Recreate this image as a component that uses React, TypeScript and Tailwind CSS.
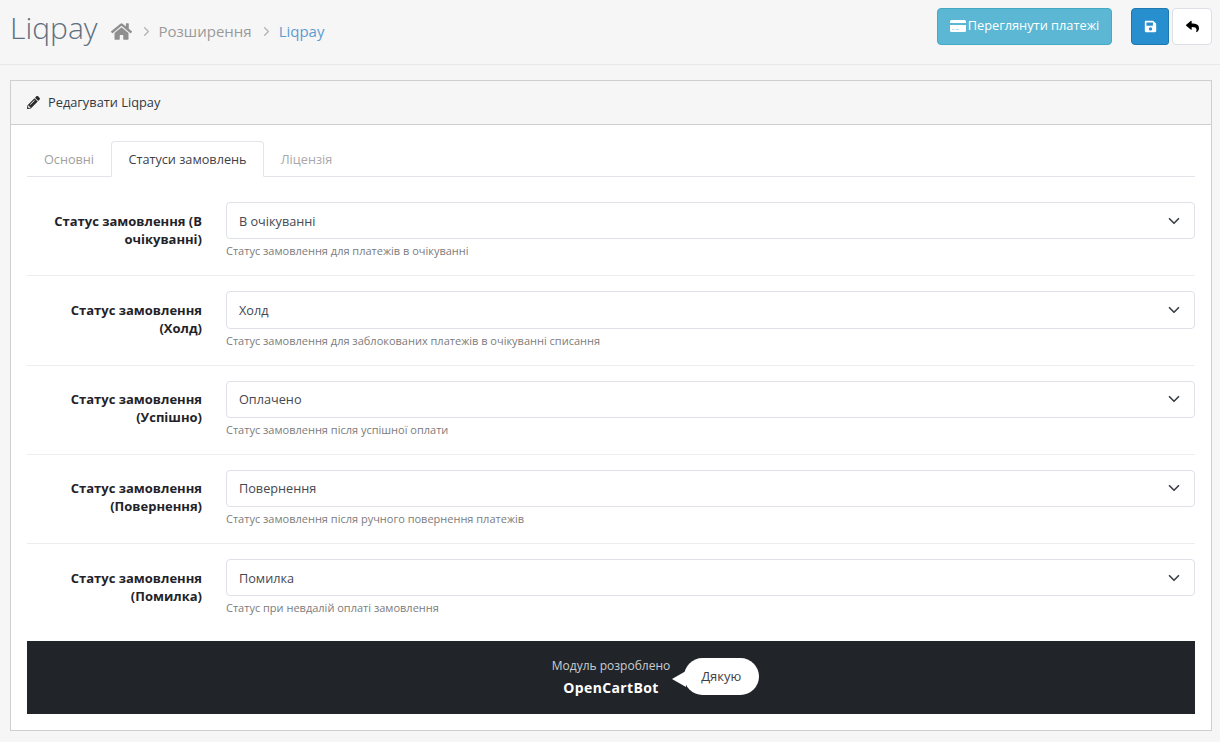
import { FaHome, FaPencilAlt, FaReply, FaSave } from 'react-icons/fa'
import { LuChevronDown, LuChevronRight } from 'react-icons/lu'

const rows = [
  { label: 'Статус замовлення (В очікуванні)', value: 'В очікуванні', help: 'Статус замовлення для платежів в очікуванні' },
  { label: 'Статус замовлення (Холд)', value: 'Холд', help: 'Статус замовлення для заблокованих платежів в очікуванні списання' },
  { label: 'Статус замовлення (Успішно)', value: 'Оплачено', help: 'Статус замовлення після успішної оплати' },
  { label: 'Статус замовлення (Повернення)', value: 'Повернення', help: 'Статус замовлення після ручного повернення платежів' },
  { label: 'Статус замовлення (Помилка)', value: 'Помилка', help: 'Статус при невдалій оплаті замовлення' },
]

function CardIcon() {
  return (
    <svg viewBox="0 0 16 12" width="16" height="12" fill="currentColor" aria-hidden>
      <path d="M1.5 0h13A1.5 1.5 0 0 1 16 1.5V3H0V1.5A1.5 1.5 0 0 1 1.5 0Z" />
      <path d="M0 5h16v5.5a1.5 1.5 0 0 1-1.5 1.5h-13A1.5 1.5 0 0 1 0 10.5V5Z" />
      <path d="M2 9h2.5v.8H2zM5.5 9H9v.8H5.5z" fill="#9fd6e6" />
    </svg>
  )
}

function StatusRow({ row, first }: { row: (typeof rows)[number]; first: boolean }) {
  return (
    <div className={`flex pb-[16px] ${first ? 'pt-0' : 'pt-[15px] border-t border-[#ededed]'}`}>
      <label className="w-[175px] shrink-0 text-right font-bold text-[13px] leading-[18px] text-[#1f2329] pt-[9.6px] pl-[10px]">
        {row.label}
      </label>
      <div className="pl-[24px] flex-1 min-w-0">
        <div className="h-[37.25px] flex items-center justify-between pl-[12px] pr-[11px] bg-white border border-[#dfe1e8] rounded-[4px] text-[12.7px] text-[#44484f]">
          <span className="pt-[1px]">{row.value}</span>
          <LuChevronDown className="text-[#3a3f47] text-[18px]" strokeWidth={2.2} />
        </div>
        <div className="mt-[4px] h-[16px] text-[11px] leading-[16px] text-[#7c7c7c]">{row.help}</div>
      </div>
    </div>
  )
}

export default function App() {
  return (
    <div className="min-h-[742px] bg-[#f6f6f6] font-['Open_Sans',sans-serif] overflow-hidden">
      <header className="h-[65px] border-b border-[#e8e8e8] flex items-center justify-between pl-[10px] pr-[8px]">
        <div className="flex items-center">
          <h1 className="text-[30px] font-light leading-none text-[#5f6f80] -mt-[8px]">Liqpay</h1>
          <nav className="flex items-center ml-[13px] -mt-[2px] text-[15px] text-[#9a9a9a]">
            <FaHome className="text-[21px] text-[#8f8f8f]" />
            <LuChevronRight className="ml-[7px] mr-[5px] text-[15px] text-[#b3b3b3]" />
            <span>Розширення</span>
            <LuChevronRight className="ml-[7px] mr-[5px] text-[15px] text-[#b3b3b3]" />
            <span className="text-[#5d9bd1]">Liqpay</span>
          </nav>
        </div>
        <div className="flex items-center -mt-[12px]">
          <button className="h-[37px] w-[175px] flex items-center justify-center gap-[2px] bg-[#5bb7d3] border border-[#46a9c7] rounded-[4px] text-white text-[12.8px]">
            <CardIcon />
            Переглянути платежі
          </button>
          <button className="ml-[19px] h-[37px] w-[38px] flex items-center justify-center bg-[#288fce] border border-[#1f78b0] rounded-l-[4px] rounded-r-[3px] text-white text-[13px]">
            <FaSave />
          </button>
          <button className="ml-[3px] h-[37px] w-[40px] flex items-center justify-center bg-white border border-[#dcdfe6] rounded-[4px] text-black text-[13px]">
            <FaReply />
          </button>
        </div>
      </header>

      <section className="mt-[15px] mx-[10px] mr-[8px] border border-[#cfcfcf] bg-white">
        <div className="h-[44px] flex items-center gap-[8px] pl-[16px] bg-[#f6f6f6] border-b border-[#cfcfcf] text-[12.8px] text-[#33383f]">
          <FaPencilAlt className="text-[13px] text-[#2a2a2a]" />
          Редагувати Liqpay
        </div>
        <div className="px-[16px] pt-[16px] pb-[16px]">
          <div className="h-[36px] flex border-b border-[#e3e5ea] text-[12.7px] mb-[25px]">
            <div className="w-[84px] h-[36px] pt-[1px] flex items-center justify-center text-[#a0a0a0]">Основні</div>
            <div className="w-[153px] h-[36px] pt-[1px] flex items-center justify-center text-[#3d4147] bg-white border border-[#e3e5ea] border-b-white rounded-t-[4px]">
              Статуси замовлень
            </div>
            <div className="w-[85px] h-[36px] pt-[1px] flex items-center justify-center text-[#a8a8a8]">Ліцензія</div>
          </div>
          {rows.map((row, i) => (
            <StatusRow key={row.value} row={row} first={i === 0} />
          ))}
          <div className="mt-[9px] h-[73px] bg-[#212529] flex items-center justify-center">
            <div className="relative text-center">
              <div className="text-[12px] leading-[18px] text-[#c9cdd2]">Модуль розроблено</div>
              <div className="mt-[3px] text-[14px] leading-[20px] font-bold text-white tracking-[0.35px]">OpenCartBot</div>
              <div className="absolute left-full top-[1px] ml-[14px] h-[37px] w-[75px] pr-[1px] flex items-center justify-center rounded-[19px] bg-white text-[13px] text-[#3d4147]">
                <span className="absolute -left-[12px] top-[13px] w-0 h-0 border-y-[8px] border-y-transparent border-r-[14px] border-r-white" />
                Дякую
              </div>
            </div>
          </div>
        </div>
      </section>
    </div>
  )
}
